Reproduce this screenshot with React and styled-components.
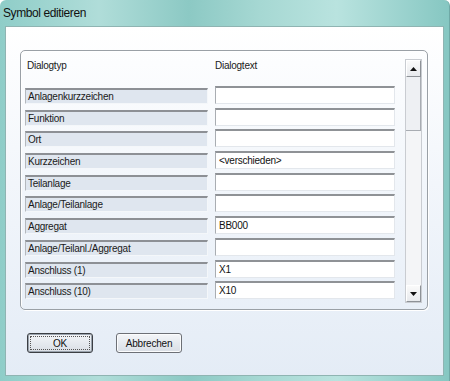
import React from 'react'
import styled, { createGlobalStyle } from 'styled-components'

const GlobalStyle = createGlobalStyle`
  html, body {
    margin: 0;
    padding: 0;
    background: #ffffff;
  }
  body {
    font-family: "Liberation Sans", Arial, sans-serif;
  }
`

const Window = styled.div`
  width: 450px;
  height: 381px;
  box-sizing: border-box;
  display: flex;
  flex-direction: column;
  padding: 0 5px 5px 5px;
  background: linear-gradient(90deg, #8fcdc8 0%, #b0ddd9 22%, #8cc9c4 42%, #a6d8d3 58%, #b9e3df 75%, #86c7c2 100%);
  border-radius: 6px 6px 0 0;
  border-right: 1px solid #6fa9a6;
`

const TitleBar = styled.div`
  height: 26px;
  display: flex;
  align-items: center;
  margin-left: -2px;
  font-size: 12px;
  letter-spacing: -0.4px;
  color: #111;
`

const Client = styled.div`
  flex: 1;
  display: flex;
  flex-direction: column;
  border: 1px solid #8fb4b2;
  background: linear-gradient(180deg, #ffffff 0%, #f2f6fb 45%, #e4ecf6 100%);
`

const GroupBox = styled.div`
  margin: 23px 0 0 14px;
  width: 408px;
  height: 260px;
  box-sizing: border-box;
  display: flex;
  gap: 10px;
  padding: 8px 5px 0 4px;
  border: 1px solid #9aa0a6;
  border-radius: 5px;
  box-shadow: inset 1px 1px 0 #ffffff, 1px 1px 0 #ffffff;
`

const Table = styled.div`
  width: 370px;
  display: flex;
  flex-direction: column;
`

const Grid = styled.div`
  display: grid;
  grid-template-columns: 183px 180px;
  column-gap: 7px;
  align-items: start;
  height: ${(p) => p.$h}px;
  font-size: 10px;
  letter-spacing: -0.25px;
  color: #1a1a1a;
`

const HeadCell = styled.div`
  line-height: 14px;
  padding-left: ${(p) => (p.$pad ? 2 : 0)}px;
`

const Label = styled.div`
  margin-top: 2px;
  height: 16px;
  box-sizing: border-box;
  padding-left: 2px;
  line-height: 14px;
  background: #dfe6ef;
  border-top: 2px solid #8d9095;
  border-left: 1px solid #b4b8bd;
  border-right: 1px solid #f4f7fa;
  border-bottom: 1px solid #f4f7fa;
`

const Field = styled.div`
  height: 18px;
  box-sizing: border-box;
  padding-left: 3px;
  line-height: 15px;
  color: #111;
  background: #ffffff;
  border-top: 2px solid #8f9296;
  border-left: 1px solid #a9adb2;
  border-right: 1px solid #e3e7ec;
  border-bottom: 1px solid #e3e7ec;
`

const ScrollBar = styled.div`
  width: 17px;
  height: 244px;
  box-sizing: border-box;
  display: flex;
  flex-direction: column;
  background: #f4f5f7;
  border: 1px solid #c9ccd1;
`

const ArrowButton = styled.div`
  height: 17px;
  box-sizing: border-box;
  display: flex;
  align-items: center;
  justify-content: center;
  background: linear-gradient(180deg, #fafafa, #e8eaed);
  border: 1px solid;
  border-color: #ffffff #8e9297 #8e9297 #ffffff;
`

const Thumb = styled.div`
  height: 54px;
  box-sizing: border-box;
  background: #eef0f3;
  border-right: 1px solid #a8acb2;
  border-bottom: 1px solid #a8acb2;
`

const Track = styled.div`
  flex: 1;
`

const ButtonRow = styled.div`
  display: flex;
  gap: 23px;
  margin: 23px 0 0 21px;
`

const Button = styled.div`
  width: 66px;
  height: 20px;
  box-sizing: border-box;
  display: flex;
  align-items: center;
  justify-content: center;
  font-size: 10px;
  letter-spacing: -0.2px;
  color: #111;
  border-radius: 3px;
  border: 1px solid ${(p) => (p.$default ? '#3c3f44' : '#6d7076')};
  background: linear-gradient(180deg, #f4f6f9 0%, #e6eaef 50%, #d9dee5 100%);
  box-shadow: inset 0 0 0 1px ${(p) => (p.$default ? '#9aa3ad' : '#fbfcfd')};
  outline: ${(p) => (p.$default ? '1px dotted #555' : 'none')};
  outline-offset: -4px;
`

const rows = [
  ['Anlagenkurzzeichen', ''],
  ['Funktion', ''],
  ['Ort', ''],
  ['Kurzzeichen', '<verschieden>'],
  ['Teilanlage', ''],
  ['Anlage/Teilanlage', ''],
  ['Aggregat', 'BB000'],
  ['Anlage/Teilanl./Aggregat', ''],
  ['Anschluss (1)', 'X1'],
  ['Anschluss (10)', 'X10'],
]

const Arrow = ({ down }) => (
  <svg width="7" height="4" viewBox="0 0 7 4">
    <path d={down ? 'M0 0H7L3.5 4Z' : 'M0 4H7L3.5 0Z'} fill="#111" />
  </svg>
)

export default function App() {
  return (
    <>
      <GlobalStyle />
      <Window>
        <TitleBar>Symbol editieren</TitleBar>
        <Client>
          <GroupBox>
            <Table>
              <Grid $h={27}>
                <HeadCell $pad>Dialogtyp</HeadCell>
                <HeadCell>Dialogtext</HeadCell>
              </Grid>
              {rows.map(([label, value]) => (
                <Grid key={label} $h={21.7}>
                  <Label>{label}</Label>
                  <Field>{value}</Field>
                </Grid>
              ))}
            </Table>
            <ScrollBar>
              <ArrowButton>
                <Arrow />
              </ArrowButton>
              <Thumb />
              <Track />
              <ArrowButton>
                <Arrow down />
              </ArrowButton>
            </ScrollBar>
          </GroupBox>
          <ButtonRow>
            <Button $default>OK</Button>
            <Button>Abbrechen</Button>
          </ButtonRow>
        </Client>
      </Window>
    </>
  )
}
